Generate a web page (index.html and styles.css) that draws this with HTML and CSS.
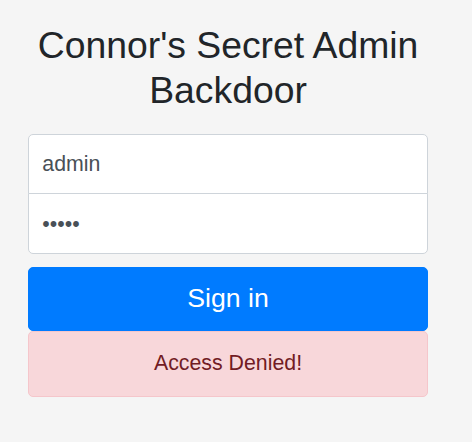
FILE: index.html
```html
<!DOCTYPE html>
<html lang="en">
<head>
<meta charset="utf-8">
<title>Connor's Secret Admin Backdoor</title>
<link rel="stylesheet" href="styles.css">
</head>
<body>
<form class="form-signin">
  <h1 class="title">Connor's Secret Admin Backdoor</h1>
  <input class="field field-top" type="text" value="admin">
  <input class="field field-bottom" type="password" value="admin">
  <button class="btn-signin" type="button">Sign in</button>
  <div class="alert">Access Denied!</div>
</form>
</body>
</html>
```
FILE: styles.css
```css
html, body {
  margin: 0;
  padding: 0;
  background: #f5f5f5;
  font-family: "Liberation Sans", Arial, sans-serif;
  color: #212529;
}
body {
  padding-top: 23px;
}
.form-signin {
  width: 400px;
  margin: 0 0 0 28px;
  display: flex;
  flex-direction: column;
}
.title {
  margin: 0 0 21.3px 0;
  font-size: 37.33px;
  line-height: 44.8px;
  font-weight: 400;
  text-align: center;
}
.field {
  box-sizing: border-box;
  width: 100%;
  height: 60px;
  padding: 2px 13.33px 0 13.33px;
  font-family: "Liberation Sans", Arial, sans-serif;
  font-size: 21.33px;
  color: #495057;
  background: #fff;
  border: 1px solid #ced4da;
  outline: none;
}
.field-top {
  border-radius: 5px 5px 0 0;
  margin-bottom: -1px;
}
.field-bottom {
  height: 61px;
  border-radius: 0 0 5px 5px;
}
.btn-signin {
  margin-top: 13px;
  height: 64px;
  background: #007bff;
  border: 1px solid #007bff;
  border-radius: 5px;
  color: #fff;
  font-family: "Liberation Sans", Arial, sans-serif;
  font-size: 26.67px;
  padding: 0;
}
.alert {
  box-sizing: border-box;
  height: 66px;
  display: flex;
  align-items: center;
  justify-content: center;
  background: #f8d7da;
  border: 1px solid #f5c6cb;
  border-radius: 5px;
  color: #721c24;
  font-size: 21.33px;
}
```
